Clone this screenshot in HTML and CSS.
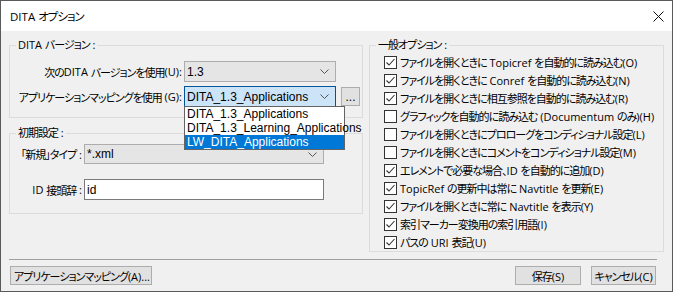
FILE: index.html
```html
<!DOCTYPE html>
<html lang="ja">
<head>
    <meta charset="UTF-8">
    <title>DITA オプション</title>
    <link rel="stylesheet" href="styles.css">
</head>
<body>
    <div class="window">
        <div class="titlebar">
            <span class="title"><span class="en">DITA </span>オプション</span>
            <svg class="close" width="11" height="11" viewBox="0 0 11 11">
                <path d="M0.5 0.5L10.5 10.5M10.5 0.5L0.5 10.5" stroke="#111" stroke-width="1" fill="none"/>
            </svg>
        </div>

        <div class="content">
            <div class="columns">
                <div class="left-col">
                    <!-- DITA version -->
                    <fieldset class="group version-group">
                        <legend><span class="en">DITA </span>バージョン<span class="en"> :</span></legend>
                        <div class="label">次の<span class="en">DITA </span>バージョンを使用<span class="en">(U):</span></div>
                        <div class="combo">
                            <span>1.3</span>
                            <svg width="9" height="5" viewBox="0 0 9 5"><path d="M0.5 0.5L4.5 4.5L8.5 0.5" fill="none" stroke="#555"/></svg>
                        </div>
                        <div></div>
                        <div class="label">アプリケーションマッピングを使用<span class="en"> (G):</span></div>
                        <div class="combo open">
                            <span>DITA_1.3_Applications</span>
                            <svg width="9" height="5" viewBox="0 0 9 5"><path d="M0.5 0.5L4.5 4.5L8.5 0.5" fill="none" stroke="#555"/></svg>
                            <ul class="dropdown">
                                <li>DITA_1.3_Applications</li>
                                <li>DITA_1.3_Learning_Applications</li>
                                <li class="selected">LW_DITA_Applications</li>
                            </ul>
                        </div>
                        <button class="more">...</button>
                    </fieldset>

                    <!-- defaults -->
                    <fieldset class="group defaults-group">
                        <legend>初期設定<span class="en"> :</span></legend>
                        <div class="label">「新規」タイプ<span class="en"> :</span></div>
                        <div class="combo small">
                            <span>*.xml</span>
                            <svg width="9" height="5" viewBox="0 0 9 5"><path d="M0.5 0.5L4.5 4.5L8.5 0.5" fill="none" stroke="#555"/></svg>
                        </div>
                        <div class="label"><span class="en">ID </span>接頭辞<span class="en"> :</span></div>
                        <input class="text-input" type="text" value="id">
                    </fieldset>
                </div>

                <!-- general options -->
                <fieldset class="group options-group">
                    <legend>一般オプション<span class="en"> :</span></legend>
                    <ul class="options">
                        <li><svg class="box" width="13" height="13" viewBox="0 0 13 13"><rect x="0.5" y="0.5" width="12" height="12" fill="#fff" stroke="#333"/><path d="M2.5 6.5L5 9L10.5 3" fill="none" stroke="#333" stroke-width="1.1"/></svg>ファイルを開くときに<span class="en"> Topicref </span>を自動的に読み込む<span class="en">(O)</span></li>
                        <li><svg class="box" width="13" height="13" viewBox="0 0 13 13"><rect x="0.5" y="0.5" width="12" height="12" fill="#fff" stroke="#333"/><path d="M2.5 6.5L5 9L10.5 3" fill="none" stroke="#333" stroke-width="1.1"/></svg>ファイルを開くときに<span class="en"> Conref </span>を自動的に読み込む<span class="en">(N)</span></li>
                        <li><svg class="box" width="13" height="13" viewBox="0 0 13 13"><rect x="0.5" y="0.5" width="12" height="12" fill="#fff" stroke="#333"/><path d="M2.5 6.5L5 9L10.5 3" fill="none" stroke="#333" stroke-width="1.1"/></svg>ファイルを開くときに相互参照を自動的に読み込む<span class="en">(R)</span></li>
                        <li><svg class="box" width="13" height="13" viewBox="0 0 13 13"><rect x="0.5" y="0.5" width="12" height="12" fill="#fff" stroke="#333"/></svg>グラフィックを自動的に読み込む<span class="en"> (Documentum </span>のみ<span class="en">)(H)</span></li>
                        <li><svg class="box" width="13" height="13" viewBox="0 0 13 13"><rect x="0.5" y="0.5" width="12" height="12" fill="#fff" stroke="#333"/></svg>ファイルを開くときにプロローグをコンディショナル設定<span class="en">(L)</span></li>
                        <li><svg class="box" width="13" height="13" viewBox="0 0 13 13"><rect x="0.5" y="0.5" width="12" height="12" fill="#fff" stroke="#333"/></svg>ファイルを開くときにコメントをコンディショナル設定<span class="en">(M)</span></li>
                        <li><svg class="box" width="13" height="13" viewBox="0 0 13 13"><rect x="0.5" y="0.5" width="12" height="12" fill="#fff" stroke="#333"/><path d="M2.5 6.5L5 9L10.5 3" fill="none" stroke="#333" stroke-width="1.1"/></svg>エレメントで必要な場合、<span class="en">ID </span>を自動的に追加<span class="en">(D)</span></li>
                        <li><svg class="box" width="13" height="13" viewBox="0 0 13 13"><rect x="0.5" y="0.5" width="12" height="12" fill="#fff" stroke="#333"/><path d="M2.5 6.5L5 9L10.5 3" fill="none" stroke="#333" stroke-width="1.1"/></svg><span class="en">TopicRef </span>の更新中は常に<span class="en"> Navtitle </span>を更新<span class="en">(E)</span></li>
                        <li><svg class="box" width="13" height="13" viewBox="0 0 13 13"><rect x="0.5" y="0.5" width="12" height="12" fill="#fff" stroke="#333"/><path d="M2.5 6.5L5 9L10.5 3" fill="none" stroke="#333" stroke-width="1.1"/></svg>ファイルを開くときに常に<span class="en"> Navtitle </span>を表示<span class="en">(Y)</span></li>
                        <li><svg class="box" width="13" height="13" viewBox="0 0 13 13"><rect x="0.5" y="0.5" width="12" height="12" fill="#fff" stroke="#333"/><path d="M2.5 6.5L5 9L10.5 3" fill="none" stroke="#333" stroke-width="1.1"/></svg>索引マーカー変換用の索引用語<span class="en">(I)</span></li>
                        <li><svg class="box" width="13" height="13" viewBox="0 0 13 13"><rect x="0.5" y="0.5" width="12" height="12" fill="#fff" stroke="#333"/><path d="M2.5 6.5L5 9L10.5 3" fill="none" stroke="#333" stroke-width="1.1"/></svg>パスの<span class="en"> URI </span>表記<span class="en">(U)</span></li>
                    </ul>
                </fieldset>
            </div>

            <div class="separator"></div>

            <div class="buttons">
                <button class="btn mapping-btn">アプリケーションマッピング<span class="en">(A)...</span></button>
                <button class="btn save-btn">保存<span class="en">(S)</span></button>
                <button class="btn cancel-btn">キャンセル<span class="en">(C)</span></button>
            </div>
        </div>
    </div>
</body>
</html>
```

FILE: styles.css
```css
body {
    margin: 0;
    font-family: "Open Sans", "Noto Sans CJK JP", sans-serif;
    font-size: 12px;
    color: #000;
    background: #fff;
}

.window {
    width: 673px;
    height: 292px;
    box-sizing: border-box;
    border: 1px solid #5a5a5a;
    background: #f0f0f0;
    display: flex;
    flex-direction: column;
    font-size: 11px;
    letter-spacing: -1px;
    font-feature-settings: "palt";
}

/* latin runs keep normal spacing */
.en {
    letter-spacing: 0;
    white-space: pre;
}

.titlebar {
    height: 30px;
    background: #fff;
    display: flex;
    align-items: center;
    justify-content: space-between;
    padding: 0 8px 0 9px;
}

.title {
    font-size: 11.5px;
}

.content {
    flex: 1;
    display: flex;
    flex-direction: column;
    padding: 7px 8px 0 8px;
}

.columns {
    display: flex;
    gap: 6px;
}

.left-col {
    width: 354px;
    display: flex;
    flex-direction: column;
    gap: 8px;
}

.group {
    margin: 0;
    border: 1px solid #dcdcdc;
    min-width: 0;
}

.group legend {
    padding: 0 2px;
    margin-left: 6px;
    line-height: 14px;
}

.label {
    display: flex;
    justify-content: flex-end;
    align-items: center;
    padding-right: 2px;
    white-space: nowrap;
}

/* DITA version group */
.version-group {
    display: grid;
    grid-template-columns: 174px 152px 24px;
    grid-template-rows: 21px 21px;
    row-gap: 4px;
    padding: 9px 2px 10px 0;
}

.combo {
    position: relative;
    box-sizing: border-box;
    height: 21px;
    border: 1px solid #adadad;
    background: #e5e5e5;
    display: flex;
    align-items: center;
    justify-content: space-between;
    padding: 0 6px 0 2px;
    font-family: "Liberation Sans", sans-serif;
    font-size: 12px;
    letter-spacing: normal;
}

.combo.open {
    background: #cce4f7;
    border-color: #005499;
}

.combo.small {
    height: 20px;
}

.dropdown {
    position: absolute;
    top: 100%;
    left: -1px;
    width: 161px;
    box-sizing: border-box;
    margin: 0;
    padding: 0;
    list-style: none;
    background: #fff;
    border: 1px solid #646464;
    z-index: 10;
}

.dropdown li {
    height: 14px;
    line-height: 14px;
    padding-left: 2px;
    white-space: nowrap;
}

.dropdown li.selected {
    background: #0078d7;
    color: #fff;
}

.more {
    width: 19px;
    height: 19px;
    margin: 0 0 0 5px;
    padding: 0;
    align-self: center;
    border: 1px solid #adadad;
    background: #e1e1e1;
    font-family: "Liberation Sans", sans-serif;
    font-size: 12px;
    letter-spacing: normal;
    line-height: 12px;
}

/* defaults group */
.defaults-group {
    display: grid;
    grid-template-columns: 74px 240px;
    grid-template-rows: 20px 21px;
    row-gap: 15px;
    padding: 4px 2px 13px 0;
}

.text-input {
    box-sizing: border-box;
    height: 21px;
    margin: 0;
    padding: 0 2px;
    border: 1px solid #7a7a7a;
    background: #fff;
    font-family: "Liberation Sans", sans-serif;
    font-size: 12px;
    letter-spacing: normal;
}

/* general options */
.options-group {
    flex: 1;
    padding: 1px 0 0 0;
}

.options {
    margin: 0;
    padding: 0 0 0 14px;
    list-style: none;
}

.options li {
    height: 18px;
    display: flex;
    align-items: center;
    white-space: nowrap;
}

.options .box {
    flex: none;
    margin-right: 3px;
}

.separator {
    height: 1px;
    background: #a0a0a0;
    margin: 7px 7px 0 0;
}

.buttons {
    display: flex;
    margin-top: 6px;
    padding: 0 8px 0 1px;
}

.btn {
    height: 19px;
    margin: 0;
    padding: 0;
    border: 1px solid #adadad;
    background: #e1e1e1;
    font-family: inherit;
    font-size: 11px;
    letter-spacing: -1px;
    font-feature-settings: "palt";
    white-space: nowrap;
    color: #000;
}

.mapping-btn {
    width: 142px;
    text-align: left;
    padding-left: 3px;
}

.save-btn {
    width: 66px;
    margin-left: auto;
}

.cancel-btn {
    width: 65px;
    margin-left: 10px;
}
```
